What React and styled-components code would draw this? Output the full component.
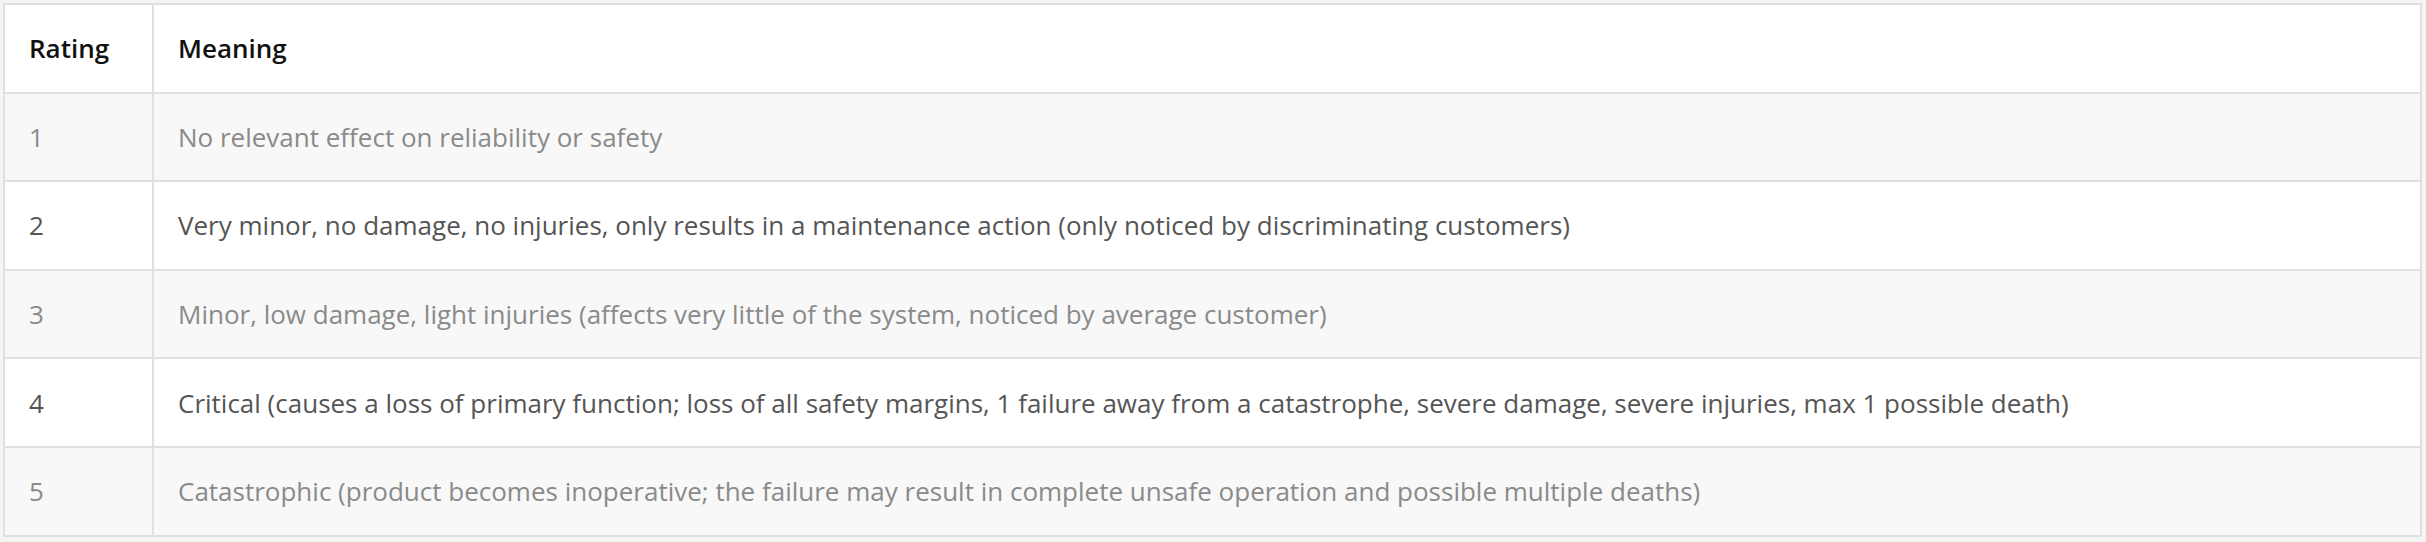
import React from "react";
import styled, { createGlobalStyle } from "styled-components";

const Global = createGlobalStyle`
  html, body { margin: 0; padding: 0; background: #f5f5f5; }
  body { font-family: "Open Sans", "Liberation Sans", sans-serif; }
`;

const Wrap = styled.div`
  padding: 3px 4px 3px 3px;
`;

const Table = styled.table`
  width: 100%;
  border-collapse: collapse;
  border: 2px solid #e0e0e0;
  font-size: 26px;
  line-height: 36px;
  background: #fff;
`;

const Row = styled.tr`
  background: ${(p) => (p.$striped ? "#f8f8f8" : "#ffffff")};
  color: ${(p) => (p.$striped ? "#8a8a8a" : "#555555")};
`;

const Head = styled.th`
  text-align: left;
  font-weight: 600;
  color: #111;
  padding: 25.3px 24px;
  border: 2px solid #e0e0e0;
  width: ${(p) => p.$w || "auto"};
`;

const Cell = styled.td`
  padding: 25.3px 24px;
  border: 2px solid #e0e0e0;
  font-weight: 400;
`;

const rows = [
  ["1", "No relevant effect on reliability or safety"],
  ["2", "Very minor, no damage, no injuries, only results in a maintenance action (only noticed by discriminating customers)"],
  ["3", "Minor, low damage, light injuries (affects very little of the system, noticed by average customer)"],
  ["4", "Critical (causes a loss of primary function; loss of all safety margins, 1 failure away from a catastrophe, severe damage, severe injuries, max 1 possible death)"],
  ["5", "Catastrophic (product becomes inoperative; the failure may result in complete unsafe operation and possible multiple deaths)"],
];

export default function App() {
  return (
    <>
      <Global />
      <Wrap>
        <Table>
          <thead>
            <tr>
              <Head $w="99px">Rating</Head>
              <Head>Meaning</Head>
            </tr>
          </thead>
          <tbody>
            {rows.map(([r, m], i) => (
              <Row key={r} $striped={i % 2 === 0}>
                <Cell>{r}</Cell>
                <Cell>{m}</Cell>
              </Row>
            ))}
          </tbody>
        </Table>
      </Wrap>
    </>
  );
}
